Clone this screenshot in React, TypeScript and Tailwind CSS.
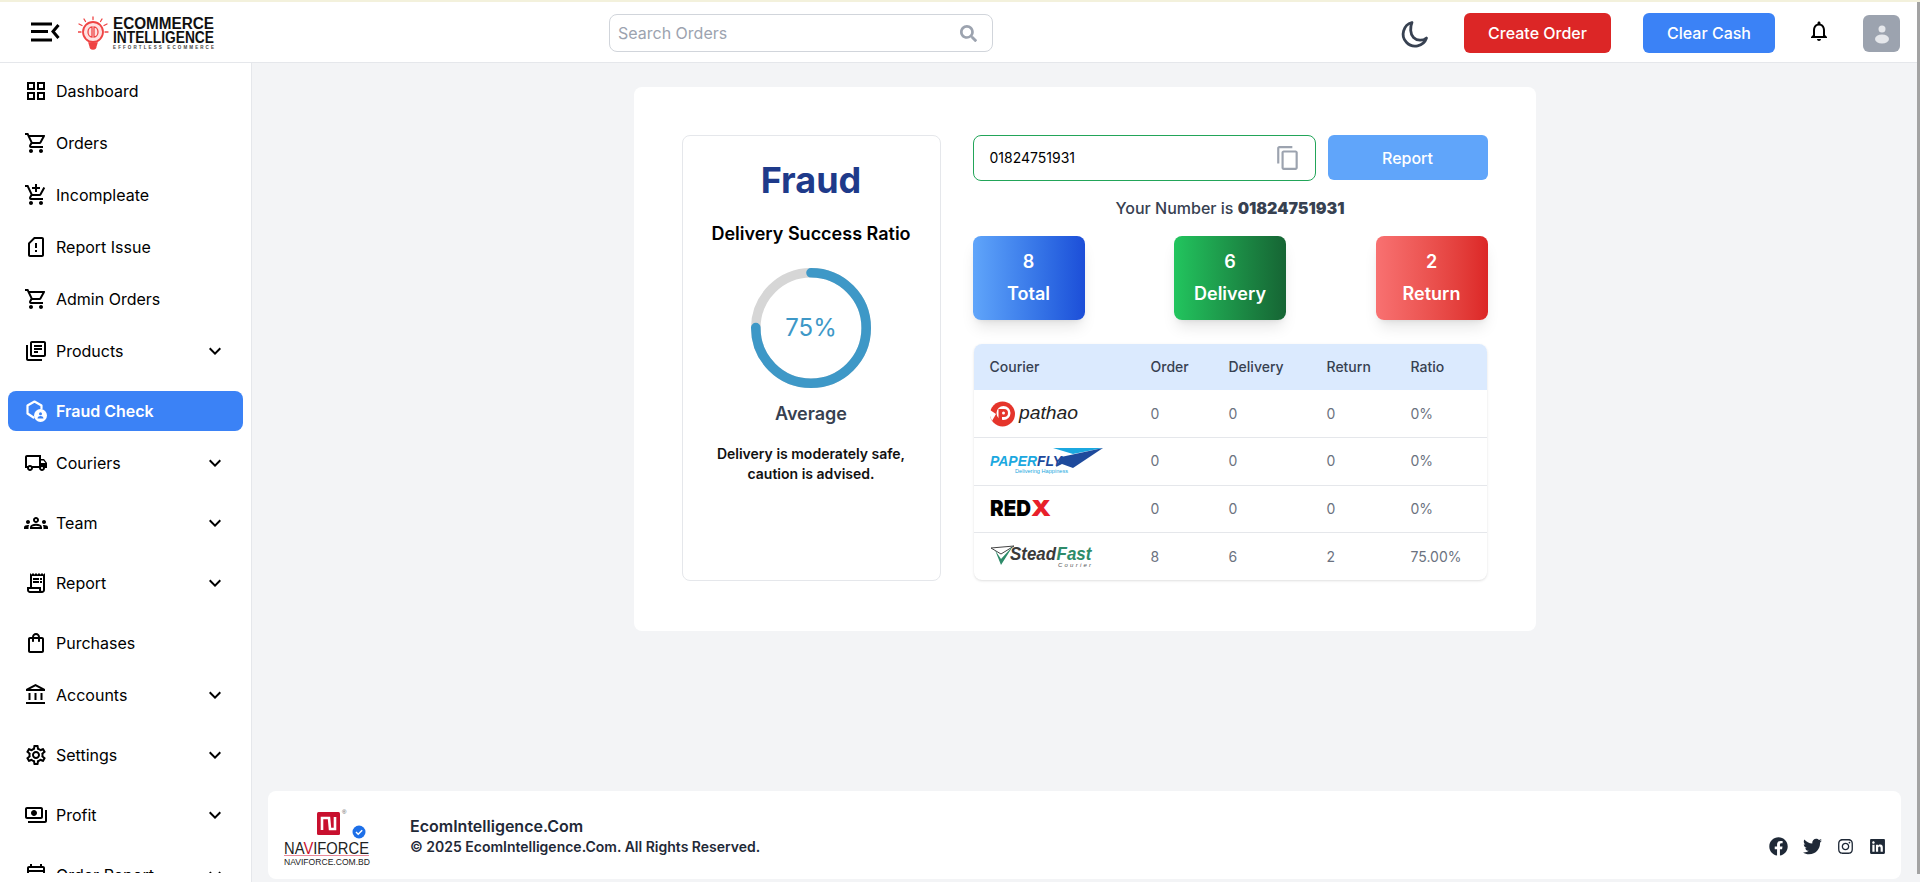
import React from "react";
import {
  MdOutlineGridView, MdOutlineShoppingCart, MdOutlineAddShoppingCart, MdOutlineSdCardAlert,
  MdOutlineLibraryBooks, MdOutlineLocalShipping, MdOutlineGroups, MdOutlineReceiptLong,
  MdOutlineShoppingBag, MdOutlineAccountBalance, MdOutlineSettings, MdOutlinePayments,
  MdOutlineEventNote, MdKeyboardArrowDown, MdContentCopy, MdOutlineNotifications,
} from "react-icons/md";
import { FaFacebook, FaTwitter, FaInstagram, FaLinkedin, FaSearch } from "react-icons/fa";

const FraudIcon = () => (
  <svg width="24" height="24" viewBox="0 0 24 24" fill="none">
    <path d="M17.500 9.500V6.500L10.500 2.500 3.500 6.500V14.500L9.500 18.500" stroke="#fff" strokeWidth="2.200" strokeLinecap="round" strokeLinejoin="round" />
    <circle cx="16.500" cy="16.500" r="6.500" fill="#fff" />
    <circle cx="16.500" cy="14.700" r="1.500" fill="#3b82f6" />
    <path d="M13.500 19.500c.3-2 1.500-2.600 3-2.600s2.700.6 3 2.600z" fill="#3b82f6" />
  </svg>
);

type Item = { label: string; icon: React.ReactNode; drop?: boolean; active?: boolean };
const items: Item[] = [
  { label: "Dashboard", icon: <MdOutlineGridView size={24} /> },
  { label: "Orders", icon: <MdOutlineShoppingCart size={24} /> },
  { label: "Incompleate", icon: <MdOutlineAddShoppingCart size={24} /> },
  { label: "Report Issue", icon: <MdOutlineSdCardAlert size={24} /> },
  { label: "Admin Orders", icon: <MdOutlineShoppingCart size={24} /> },
  { label: "Products", icon: <MdOutlineLibraryBooks size={24} />, drop: true },
  { label: "Fraud Check", icon: <FraudIcon />, active: true },
  { label: "Couriers", icon: <MdOutlineLocalShipping size={24} />, drop: true },
  { label: "Team", icon: <MdOutlineGroups size={24} />, drop: true },
  { label: "Report", icon: <MdOutlineReceiptLong size={24} />, drop: true },
  { label: "Purchases", icon: <MdOutlineShoppingBag size={24} /> },
  { label: "Accounts", icon: <MdOutlineAccountBalance size={24} />, drop: true },
  { label: "Settings", icon: <MdOutlineSettings size={24} />, drop: true },
  { label: "Profit", icon: <MdOutlinePayments size={24} />, drop: true },
  { label: "Order Report", icon: <MdOutlineEventNote size={24} />, drop: true },
];

const MenuIcon = () => (
  <svg width="30" height="20" viewBox="0 0 30 20" fill="none" stroke="#000" strokeWidth="3">
    <path d="M0 2H21M0 9.500H17M0 18H21" />
    <path d="M27.500 3 22 9.500 27.500 16" strokeWidth="3" />
  </svg>
);

const BrandLogo = () => (
  <svg width="150" height="42" viewBox="0 0 150 42">
    <g stroke="#ef4444" strokeWidth="1.300" fill="none" strokeLinecap="round" transform="translate(0 3)">
      <circle cx="15" cy="16" r="10" strokeWidth="1.800" fill="#fee2e2" />
      <path d="M10 16c0-3 2-5 4-5v10c-2 0-4-2-4-5zM20 16c0-3-2-5-4-5v10c2 0 4-2 4-5z" />
      <path d="M11 27h8l-1 3a3 3 0 0 1-6 0z" fill="#ef4444" />
      <path d="M15 1V3.500M6 3l1.500 2.500M24 3l-1.500 2.500M0 16H3M27 16H30M1 8l3 1.500M29 8l-3 1.500" />
    </g>
    <text x="35" y="16" fontFamily="Liberation Sans" fontWeight="700" fontSize="16" textLength="101" lengthAdjust="spacingAndGlyphs" fill="#111">ECOMMERCE</text>
    <text x="35" y="30" fontFamily="Liberation Sans" fontWeight="700" fontSize="16" textLength="101" lengthAdjust="spacingAndGlyphs" fill="#111">INTELLIGENCE</text>
    <text x="35" y="36" fontFamily="Liberation Sans" fontWeight="700" fontSize="4.500" textLength="101" fill="#444">EFFORTLESS ECOMMERCE</text>
  </svg>
);

const Pathao = () => (
  <svg width="92" height="26" viewBox="0 0 92 26">
    <circle cx="12.500" cy="13" r="12.500" fill="#e5352b" />
    <circle cx="13.500" cy="12" r="7" fill="#fff" />
    <path d="M0 9 6 13 2 20 0 15z" fill="#fff" />
    <path d="M8.500 8H14a4 4 0 0 1 0 8h-2v5H8.500z" fill="#e5352b" />
    <circle cx="13.500" cy="12" r="1.500" fill="#fff" />
    <text x="29" y="18" fontFamily="Liberation Sans" fontStyle="italic" fontSize="18" textLength="59" lengthAdjust="spacingAndGlyphs" fill="#222">pathao</text>
  </svg>
);
const Paperfly = () => (
  <svg width="114" height="28" viewBox="0 0 114 28">
    <path d="M63 1H113L83 7z" fill="#1ba8e0" />
    <path d="M113 1 71 10 66 20 72 17 83 21z" fill="#1e4a9c" />
    <text x="0" y="19" fontFamily="Liberation Sans" fontStyle="italic" fontWeight="700" fontSize="14" textLength="47" lengthAdjust="spacingAndGlyphs" fill="#1ba8e0">PAPER</text>
    <text x="47" y="19" fontFamily="Liberation Sans" fontStyle="italic" fontWeight="700" fontSize="14" textLength="25" lengthAdjust="spacingAndGlyphs" fill="#1e4a9c">FLY</text>
    <text x="25" y="26" fontFamily="Liberation Sans" fontSize="6" textLength="53" lengthAdjust="spacingAndGlyphs" fill="#1ba8e0">Delivering Happiness</text>
  </svg>
);
const RedX = () => (
  <svg width="64" height="18" viewBox="0 0 64 18">
    <text x="0" y="16" fontFamily="Inter" fontWeight="900" fontSize="22" textLength="41" lengthAdjust="spacingAndGlyphs" fill="#000">RED</text>
    <text x="41" y="16" fontFamily="Inter" fontWeight="900" fontSize="22" textLength="20" lengthAdjust="spacingAndGlyphs" fill="#e8202a">X</text>
  </svg>
);
const SteadFast = () => (
  <svg width="104" height="24" viewBox="0 0 104 24">
    <path d="M1 3 24 1 11 9z" fill="none" stroke="#444" strokeWidth="1" />
    <path d="M5 5 11 20 23 1 11 14z" fill="#2e8b6a" />
    <text x="20" y="15" fontFamily="Liberation Sans" fontStyle="italic" fontWeight="700" fontSize="19" textLength="46" lengthAdjust="spacingAndGlyphs" fill="#3a3a3a">Stead</text>
    <text x="66.500" y="15" fontFamily="Liberation Sans" fontStyle="italic" fontWeight="700" fontSize="19" textLength="35" lengthAdjust="spacingAndGlyphs" fill="#2e8b6a">Fast</text>
    <text x="68" y="22" fontFamily="Liberation Sans" fontStyle="italic" fontSize="6" textLength="33" fill="#555">Courier</text>
  </svg>
);
const Naviforce = () => (
  <svg width="95" height="66" viewBox="0 0 95 66">
    <rect x="37" y="10" width="23" height="23" rx="1.500" fill="#c8102e" />
    <path d="M42 28V16H49L50 27H55V15" fill="none" stroke="#fff" strokeWidth="2.600" />
    <text x="62" y="12" fontFamily="Liberation Sans" fontSize="6" fill="#555">®</text>
    <circle cx="79" cy="30" r="6.500" fill="#1d6fe8" />
    <path d="M76 30l2.200 2.200 4-4" fill="none" stroke="#fff" strokeWidth="1.500" />
    <text x="4" y="52" fontFamily="Liberation Sans" fontSize="16" textLength="85" lengthAdjust="spacingAndGlyphs" fill="#222">NA<tspan fill="#c8102e">V</tspan>IFORCE</text>
    <rect x="4" y="53" width="85" height="1" fill="#e88a9a" />
    <text x="4" y="63" fontFamily="Liberation Sans" fontSize="8.500" textLength="86" lengthAdjust="spacingAndGlyphs" fill="#222">NAVIFORCE.COM.BD</text>
  </svg>
);

const rows = [
  { logo: <Pathao />, o: "0", d: "0", r: "0", p: "0%" },
  { logo: <Paperfly />, o: "0", d: "0", r: "0", p: "0%" },
  { logo: <RedX />, o: "0", d: "0", r: "0", p: "0%" },
  { logo: <SteadFast />, o: "8", d: "6", r: "2", p: "75.00%" },
];

const C = 2 * Math.PI * 55.2;

export default function App() {
  return (
    <div className="h-[882px] overflow-hidden flex flex-col bg-[#f3f4f6] text-black font-['Inter',sans-serif]">
      <div className="h-[2px] bg-[#f3f1dc] shrink-0" />
      <div className="flex-1 flex min-h-0">
        <div className="flex-1 flex flex-col min-w-0">
          <header className="h-[61px] shrink-0 bg-white border-b border-[#e5e7eb] flex items-center">
            <div className="ml-[31px] mt-[-1px]"><MenuIcon /></div>
            <div className="ml-[17px] mt-[4px]"><BrandLogo /></div>
            <div className="ml-[381px] w-[384px] h-[38px] rounded-lg border border-[#d1d5db] flex items-center justify-between pl-[8px] pr-[15px] mt-[2px]">
              <span className="text-base text-[#9ca3af]">Search Orders</span>
              <FaSearch size={17} className="text-[#9ca3af]" />
            </div>
            <svg width="30" height="30" viewBox="0 0 30 30" fill="none" className="ml-[406px] mt-[5px]">
              <path d="M13 2.500A12 12 0 1 0 27.500 18C24 21 18 21 14.500 17.500S11 7 13 2.500z" stroke="#374151" strokeWidth="2.800" strokeLinejoin="round" />
            </svg>
            <button className="ml-[35px] w-[147px] h-[40px] rounded-md bg-[#dc2626] text-white text-base font-medium mt-[2px]">Create Order</button>
            <button className="ml-[32px] w-[132px] h-[40px] rounded-md bg-[#3b82f6] text-white text-base font-medium mt-[2px]">Clear Cash</button>
            <MdOutlineNotifications size={24} className="ml-[32px] mt-[-3px]" />
            <div className="ml-[32px] w-[37px] h-[37px] rounded-md bg-[#9ca3af] flex items-center justify-center mt-[3px]">
              <svg width="20" height="24" viewBox="0 0 20 24" fill="#e5e7eb">
                <circle cx="10" cy="7" r="3.500" />
                <ellipse cx="10" cy="17" rx="7" ry="4.500" />
              </svg>
            </div>
          </header>
          <div className="flex-1 flex min-h-0">
            <aside className="w-[252px] shrink-0 bg-white border-r border-[#e5e7eb] pb-[9px]">
              <nav className="h-full overflow-hidden pt-[8px] pl-[8px] pr-[8px]">
                {items.map((it) => (
                  <div
                    key={it.label}
                    className={`h-[40px] shrink-0 flex items-center pl-[16px] pr-[16px] rounded-lg ${it.drop ? "mb-[20px]" : "mb-[12px]"} ${it.active ? "bg-[#3b82f6] text-white font-semibold" : "font-normal"}`}
                  >
                    <span className="w-[24px] h-[24px] flex items-center justify-center shrink-0">{it.icon}</span>
                    <span className="ml-[8px] text-base flex-1">{it.label}</span>
                    {it.drop && <MdKeyboardArrowDown size={24} />}
                  </div>
                ))}
              </nav>
            </aside>
            <main className="flex-1 flex flex-col items-center pt-[24px] pb-[3px] min-w-0">
              <section className="w-[902px] h-[544px] bg-white rounded-lg p-12 flex gap-[32px]">
                <div className="w-[259px] h-[446px] rounded-lg border border-[#e5e7eb] flex flex-col items-center">
                  <h1 className="text-4xl font-bold text-[#1e3a8a] mt-[24px]">Fraud</h1>
                  <h2 className="text-lg font-semibold mt-[20px]">Delivery Success Ratio</h2>
                  <div className="relative w-[120px] h-[120px] mt-[20px]">
                    <svg width="120" height="120" viewBox="0 0 120 120">
                      <circle cx="60" cy="60" r="55.200" fill="none" stroke="#d6d6d6" strokeWidth="9.600" strokeLinecap="round" />
                      <circle cx="60" cy="60" r="55.200" fill="none" stroke="#3e98c7" strokeWidth="9.600" strokeLinecap="round" strokeDasharray={`${C * 0.75} ${C}`} transform="rotate(-90 60 60)" />
                    </svg>
                    <span className="absolute inset-0 flex items-center justify-center text-[24px] text-[#3e98c7]">75%</span>
                  </div>
                  <p className="text-lg font-semibold text-[#374151] mt-[12px]">Average</p>
                  <p className="text-sm font-semibold text-center leading-[20px] mt-[16px] w-[200px] text-[#111]">Delivery is moderately safe, caution is advised.</p>
                </div>
                <div className="w-[515px]">
                  <div className="flex gap-3">
                    <div className="w-[343px] h-[46px] rounded-lg border border-[#22a559] flex items-center justify-between pl-[16px] pr-[14px]">
                      <span className="text-sm">01824751931</span>
                      <MdContentCopy size={26} className="text-[#9ca3af]" />
                    </div>
                    <button className="w-[160px] h-[45px] rounded-md bg-[#60a5fa] text-white text-base font-medium">Report</button>
                  </div>
                  <p className="text-center text-base font-medium text-[#374151] mt-[15px] leading-[24px]">Your Number is <span className="font-black">01824751931</span></p>
                  <div className="flex justify-between mt-[16px]">
                    {[
                      ["8", "Total", "from-[#60a5fa] to-[#1d4ed8]"],
                      ["6", "Delivery", "from-[#22c55e] to-[#166534]"],
                      ["2", "Return", "from-[#f87171] to-[#dc2626]"],
                    ].map(([n, l, g]) => (
                      <div key={l} className={`w-[112px] h-[84px] rounded-lg bg-gradient-to-r ${g} text-white text-lg font-semibold shadow-lg flex flex-col items-center justify-center gap-[4px]`}>
                        <span className="leading-[28px]">{n}</span>
                        <span className="leading-[28px]">{l}</span>
                      </div>
                    ))}
                  </div>
                  <div className="mt-[24px] mx-[1px] rounded-lg shadow-sm overflow-hidden">
                    <table className="w-full table-fixed text-sm">
                      <colgroup>
                        <col className="w-[161px]" /><col className="w-[78px]" /><col className="w-[98px]" /><col className="w-[84px]" /><col />
                      </colgroup>
                      <thead>
                        <tr className="h-[46px] bg-[#dbeafe] text-[#374151] text-left">
                          {["Courier", "Order", "Delivery", "Return", "Ratio"].map((h) => (
                            <th key={h} className="pl-4 font-medium">{h}</th>
                          ))}
                        </tr>
                      </thead>
                      <tbody className="text-[#6b7280]">
                        {rows.map((r, i) => (
                          <tr key={i} className="h-[47.600px] border-t border-[#e5e7eb] first:border-t-0">
                            <td className="pl-4"><div className="flex items-center">{r.logo}</div></td>
                            <td className="pl-4">{r.o}</td>
                            <td className="pl-4">{r.d}</td>
                            <td className="pl-4">{r.r}</td>
                            <td className="pl-4">{r.p}</td>
                          </tr>
                        ))}
                      </tbody>
                    </table>
                  </div>
                </div>
              </section>
              <footer className="mt-auto w-[1633px] h-[88px] bg-white rounded-lg flex items-center pl-[12px] pr-[15px]">
                <Naviforce />
                <div className="ml-[35px] mt-[2px]">
                  <p className="text-base font-semibold text-[#1f2937] leading-[22px]">EcomIntelligence.Com</p>
                  <p className="text-sm font-semibold text-[#1f2937] leading-[20px]">© 2025 EcomIntelligence.Com. All Rights Reserved.</p>
                </div>
                <div className="ml-auto self-end mb-[23px] flex items-center gap-[15px] text-[#1f2937]">
                  <FaFacebook size={19} />
                  <FaTwitter size={19} />
                  <FaInstagram size={17} />
                  <FaLinkedin size={17} />
                </div>
              </footer>
            </main>
          </div>
        </div>
        <div className="w-[3px] shrink-0 mb-[8px] bg-[#a3a3a3]" />
      </div>
    </div>
  );
}
